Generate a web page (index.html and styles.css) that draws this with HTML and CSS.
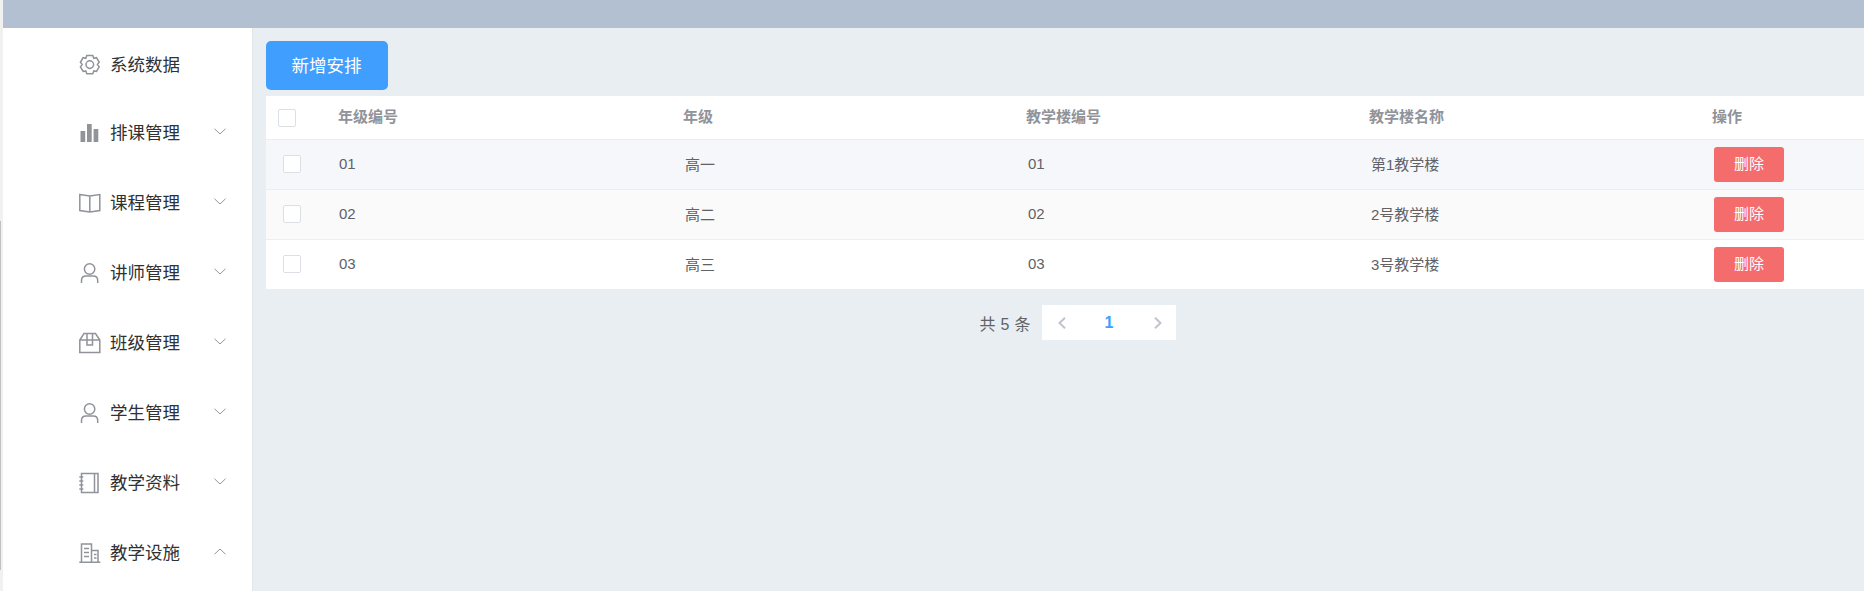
FILE: index.html
```html
<!DOCTYPE html>
<html lang="zh-CN">
<head>
    <meta charset="UTF-8">
    <meta name="viewport" content="width=device-width, initial-scale=1.0">
    <title>教学设施</title>
    <link rel="stylesheet" href="styles.css">
</head>
<body>
    <div class="scroll-track"><div class="scroll-thumb"></div></div>

    <div class="app">
        <header class="top-bar"></header>

        <div class="app-body">
            <aside class="side-menu">
                <div class="menu-item">
                    <svg class="menu-icon" viewBox="0 0 22 22"><path d="M7.800 1.500h6l1 2.800 2.700-.6 2.700 4.600-1.800 2.300 1.800 2.300-2.700 4.600-2.700-.6-1 2.800h-6l-1-2.800-2.700.6L1.400 12.900l1.800-2.300-1.800-2.300 2.700-4.600 2.700.6z" /><circle cx="10.800" cy="10.600" r="3.800"/></svg>
                    <span class="menu-label">系统数据</span>
                </div>
                <div class="menu-item">
                    <svg class="menu-icon" viewBox="0 0 22 22"><path class="icon-fill" d="M1.500 9h4.700v11H1.500zM8 2h4.700v18H8zM14.600 7h4.700v13h-4.700z"/></svg>
                    <span class="menu-label">排课管理</span>
                    <svg class="menu-arrow" viewBox="0 0 12 7"><path d="M.5.800 6 6 11.500.800"/></svg>
                </div>
                <div class="menu-item">
                    <svg class="menu-icon" viewBox="0 0 22 22"><path d="M.8 2.500 10.800 4l10-1.500v16l-10 1.500-10-1.500zM10.800 4v16"/></svg>
                    <span class="menu-label">课程管理</span>
                    <svg class="menu-arrow" viewBox="0 0 12 7"><path d="M.5.800 6 6 11.500.800"/></svg>
                </div>
                <div class="menu-item">
                    <svg class="menu-icon" viewBox="0 0 22 22"><circle cx="10.600" cy="7" r="5.200"/><path d="M2.500 21v-2.500c0-3 2-4.500 4.500-4.500h7.200c2.500 0 4.500 1.500 4.500 4.500V21"/></svg>
                    <span class="menu-label">讲师管理</span>
                    <svg class="menu-arrow" viewBox="0 0 12 7"><path d="M.5.800 6 6 11.500.800"/></svg>
                </div>
                <div class="menu-item">
                    <svg class="menu-icon" viewBox="0 0 22 22"><path d="M.8 8 5 1.500h11.500L20.800 8v12.500H.8zM.8 8h20M8 1.500V13h5.500V1.500"/></svg>
                    <span class="menu-label">班级管理</span>
                    <svg class="menu-arrow" viewBox="0 0 12 7"><path d="M.5.800 6 6 11.500.800"/></svg>
                </div>
                <div class="menu-item">
                    <svg class="menu-icon" viewBox="0 0 22 22"><circle cx="10.600" cy="7" r="5.200"/><path d="M2.500 21v-2.500c0-3 2-4.500 4.500-4.500h7.200c2.500 0 4.500 1.500 4.500 4.500V21"/></svg>
                    <span class="menu-label">学生管理</span>
                    <svg class="menu-arrow" viewBox="0 0 12 7"><path d="M.5.800 6 6 11.500.800"/></svg>
                </div>
                <div class="menu-item">
                    <svg class="menu-icon" viewBox="0 0 22 22"><path d="M2.500 1.500h16.500v19H2.500zM15.500 1.500v19M.3 5h4M.3 9h4M.3 13h4M.3 17h4"/></svg>
                    <span class="menu-label">教学资料</span>
                    <svg class="menu-arrow" viewBox="0 0 12 7"><path d="M.5.800 6 6 11.500.800"/></svg>
                </div>
                <div class="menu-item">
                    <svg class="menu-icon" viewBox="0 0 22 22"><path d="M.3 20.300h21M2.500 20.300V2h10v18.300M12.500 8.500h6.500v11.800M5 6.500h5M5 10.500h5M5 14.500h5M15 12.500h2.500M15 16h2.500"/></svg>
                    <span class="menu-label">教学设施</span>
                    <svg class="menu-arrow" viewBox="0 0 12 7"><path d="M.5 6.200 6 1l5.500 5.200"/></svg>
                </div>
            </aside>

            <main class="content">
                <button class="add-button">新增安排</button>

                <table class="grid">
                    <colgroup>
                        <col class="col-check">
                        <col class="col-first">
                        <col class="col-text">
                        <col class="col-text">
                        <col class="col-text">
                        <col>
                    </colgroup>
                    <thead>
                        <tr>
                            <th><span class="check-box head-check"></span></th>
                            <th><span class="cell-text">年级编号</span></th>
                            <th><span class="cell-text">年级</span></th>
                            <th><span class="cell-text">教学楼编号</span></th>
                            <th><span class="cell-text">教学楼名称</span></th>
                            <th><span class="cell-text">操作</span></th>
                        </tr>
                    </thead>
                    <tbody>
                        <tr class="row-hover">
                            <td><span class="check-box"></span></td>
                            <td><span class="cell-text">01</span></td>
                            <td><span class="cell-text">高一</span></td>
                            <td><span class="cell-text">01</span></td>
                            <td><span class="cell-text">第1教学楼</span></td>
                            <td><button class="delete-button">删除</button></td>
                        </tr>
                        <tr class="row-stripe">
                            <td><span class="check-box"></span></td>
                            <td><span class="cell-text">02</span></td>
                            <td><span class="cell-text">高二</span></td>
                            <td><span class="cell-text">02</span></td>
                            <td><span class="cell-text">2号教学楼</span></td>
                            <td><button class="delete-button">删除</button></td>
                        </tr>
                        <tr>
                            <td><span class="check-box"></span></td>
                            <td><span class="cell-text">03</span></td>
                            <td><span class="cell-text">高三</span></td>
                            <td><span class="cell-text">03</span></td>
                            <td><span class="cell-text">3号教学楼</span></td>
                            <td><button class="delete-button">删除</button></td>
                        </tr>
                    </tbody>
                </table>

                <div class="pager">
                    <span class="pager-total">共 5 条</span>
                    <div class="pager-box">
                        <span class="pager-cell pager-prev">
                            <svg class="pager-arrow" viewBox="0 0 8 12"><path d="M7 .7 1.500 6 7 11.300"/></svg>
                        </span>
                        <span class="pager-cell pager-current">1</span>
                        <span class="pager-cell pager-next">
                            <svg class="pager-arrow" viewBox="0 0 8 12"><path d="M1 .7 6.500 6 1 11.300"/></svg>
                        </span>
                    </div>
                </div>
            </main>
        </div>
    </div>
</body>
</html>
```

FILE: styles.css
```css
* {
    margin: 0;
    padding: 0;
    box-sizing: border-box;
}

html, body {
    height: 100%;
    overflow: hidden;
}

body {
    display: flex;
    font-family: "Liberation Sans", "Noto Sans CJK SC", sans-serif;
    color: #606266;
    background: #fff;
}

.scroll-track {
    position: relative;
    flex: 0 0 3px;
    background: #f1f1f1;
}

.scroll-thumb {
    position: absolute;
    left: 0;
    top: 221px;
    width: 1px;
    height: 349px;
    background: #c1c1c1;
}

.app {
    flex: 1;
    min-width: 0;
    display: flex;
    flex-direction: column;
}

.top-bar {
    flex: 0 0 28px;
    background: #b3c0d1;
}

.app-body {
    flex: 1;
    min-height: 0;
    display: flex;
}

.side-menu {
    flex: 0 0 250px;
    background: #fff;
    border-right: 1px solid #e6e6e6;
}

.menu-item {
    display: flex;
    align-items: center;
    height: 70px;
    padding-left: 76px;
}

.menu-item:first-child {
    padding-top: 4px;
}

.menu-icon {
    flex: 0 0 22px;
    width: 22px;
    height: 22px;
    margin-right: 9px;
    fill: none;
    stroke: #909399;
    stroke-width: 1.5;
}

.menu-icon .icon-fill {
    fill: #909399;
    stroke: none;
}

.menu-label {
    padding-bottom: 3px;
    font-size: 17.5px;
    color: #303133;
}

.menu-arrow {
    width: 12px;
    height: 7px;
    margin-left: 34px;
    margin-top: -3px;
    fill: none;
    stroke: #909399;
    stroke-width: 1;
}

.content {
    flex: 1;
    min-width: 0;
    padding: 13px 0 0 13px;
    background: #e9eef3;
}

.add-button {
    display: block;
    width: 122px;
    height: 49px;
    margin-bottom: 6px;
    padding: 0 1px 2px 0;
    font-family: inherit;
    font-size: 17.5px;
    color: #fff;
    background: #409eff;
    border: none;
    border-radius: 5px;
}

.grid {
    width: 100%;
    table-layout: fixed;
    border-collapse: separate;
    border-spacing: 0;
    font-size: 15px;
    background: #fff;
}

.col-check {
    width: 72px;
}

.col-first {
    width: 345px;
}

.col-text {
    width: 343px;
}

.grid th {
    height: 44px;
    text-align: left;
    font-weight: 700;
    color: #909399;
    border-bottom: 1px solid #ebeef5;
}

.grid th .cell-text {
    padding-bottom: 5px;
}

.grid td {
    height: 50px;
    padding-left: 1px;
    border-bottom: 1px solid #ebeef5;
}

.grid td:nth-child(n+3) {
    padding-left: 2px;
}

.grid tbody tr:last-child td {
    height: 49px;
    border-bottom: none;
}

.cell-text {
    display: block;
    padding-bottom: 3px;
}

.row-hover td {
    background: #f5f7fa;
}

.row-stripe td {
    background: #fafafa;
}

.check-box {
    display: block;
    width: 18px;
    height: 18px;
    margin: 0 0 1px 16px;
    background: #fff;
    border: 1px solid #dcdfe6;
    border-radius: 2px;
}

.head-check {
    margin: 0 0 0 12px;
}

.delete-button {
    display: block;
    width: 70px;
    height: 35px;
    padding-bottom: 5px;
    font-family: inherit;
    font-size: 15px;
    color: #fff;
    background: #f56c6c;
    border: none;
    border-radius: 3px;
}

.pager {
    display: flex;
    justify-content: center;
    align-items: center;
    margin-top: 16px;
    padding-left: 26px;
}

.pager-total {
    margin-right: 12px;
    font-size: 16px;
    word-spacing: 0.5px;
}

.pager-box {
    display: flex;
    height: 35px;
    background: #fff;
}

.pager-cell {
    display: flex;
    align-items: center;
    justify-content: center;
    width: 44.67px;
    font-size: 16px;
    font-weight: 700;
}

.pager-prev {
    padding-right: 6px;
}

.pager-next {
    padding-left: 7px;
}

.pager-current {
    padding-right: 1px;
    color: #409eff;
}

.pager-arrow {
    width: 8px;
    height: 12px;
    fill: none;
    stroke: #c0c4cc;
    stroke-width: 2;
}
```
